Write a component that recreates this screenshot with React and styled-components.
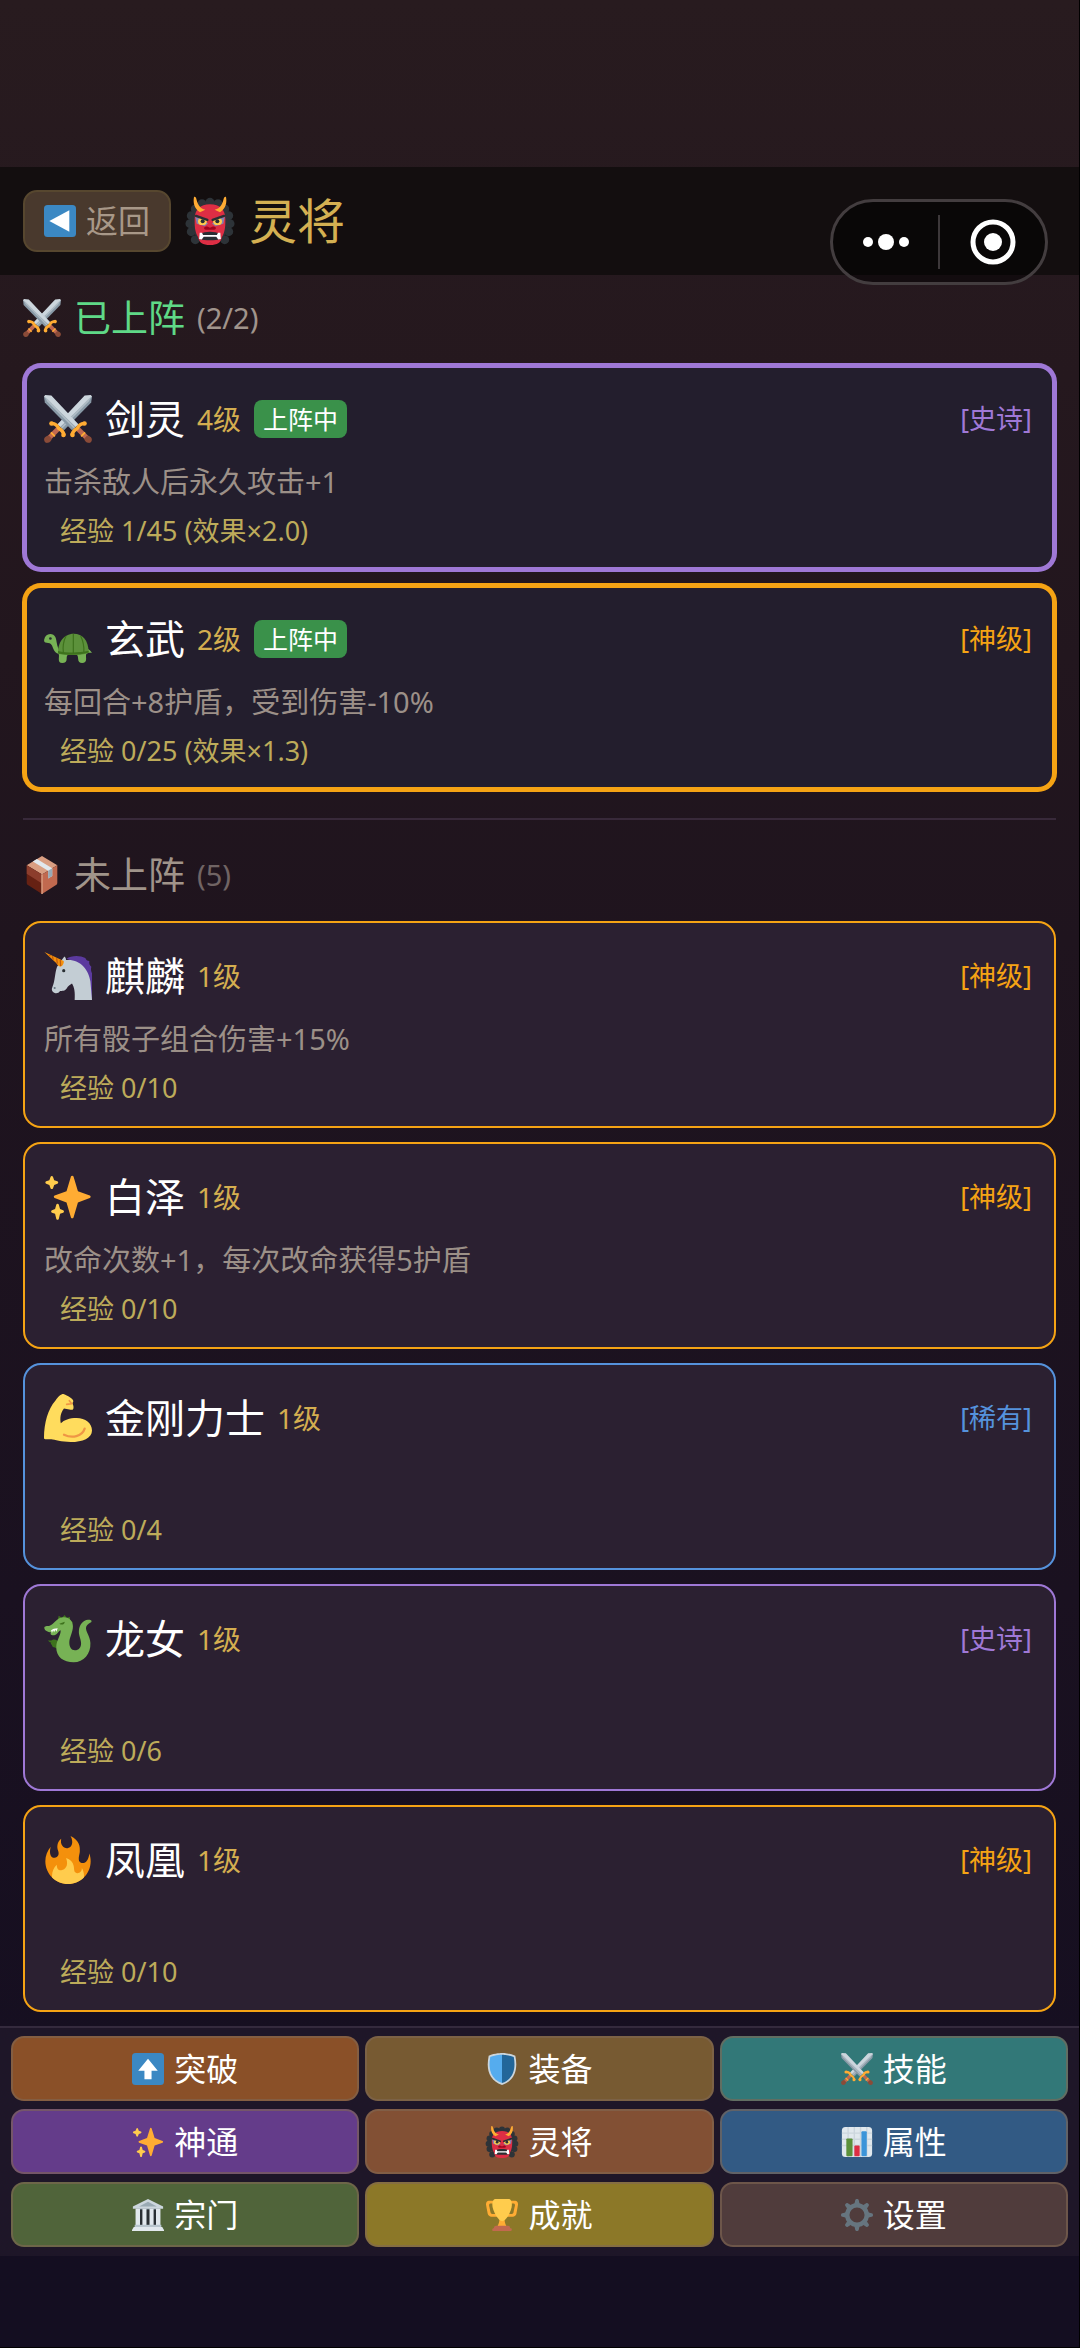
import React from 'react';
import styled, { createGlobalStyle } from 'styled-components';

const GlobalStyle = createGlobalStyle`
    * {
        box-sizing: border-box;
    }
    body {
        margin: 0;
        background: #140e21;
        font-family: 'Noto Sans', 'Noto Sans CJK SC', sans-serif;
    }
    button {
        font-family: inherit;
        cursor: pointer;
    }
`;

const rarities = {
    epic: { label: '[史诗]', color: '#9f78d6' },
    divine: { label: '[神级]', color: '#f5a314' },
    rare: { label: '[稀有]', color: '#5592dc' },
};

const Page = styled.div`
    min-height: 100vh;
    display: flex;
    flex-direction: column;
    padding-top: 167px;
    border-right: 1px solid #000;
    border-bottom: 1px solid #000;
    background: linear-gradient(#281b1f 0%, #25181e 16%, #1f141e 40%, #1a1120 68%, #140e21 96%);
`;

const Header = styled.header`
    display: flex;
    align-items: center;
    gap: 15px;
    height: 108px;
    padding: 0 23px;
    background: #130e0f;
`;

const BackButton = styled.button`
    display: flex;
    align-items: center;
    justify-content: center;
    gap: 10px;
    width: 148px;
    height: 62px;
    padding: 0;
    border: 2px solid #57472f;
    border-radius: 14px;
    background: #49392d;
    color: #a89888;
    font-size: 32px;
    line-height: 44px;
`;

const Title = styled.h1`
    display: flex;
    align-items: center;
    gap: 15px;
    margin: 0;
    color: #d4b052;
    font-size: 48px;
    line-height: 60px;
    font-weight: 400;
`;

const Capsule = styled.div`
    position: absolute;
    top: 199px;
    right: 32px;
    display: flex;
    align-items: center;
    width: 218px;
    height: 86px;
    border: 3px solid #433d3f;
    border-radius: 43px;
    background: rgba(0, 0, 0, 0.5);
`;

const CapsuleButton = styled.button`
    flex: 1;
    display: flex;
    align-items: center;
    justify-content: center;
    height: 54px;
    padding: 0;
    border: 0;
    background: none;

    & + & {
        border-left: 2px solid #3d383a;
    }
`;

const Main = styled.main`
    flex: 1;
    padding: 17px 23px 14px;
`;

const SectionTitle = styled.h2`
    display: flex;
    align-items: center;
    gap: 13px;
    margin: 0 0 20px;
    color: ${props => props.$color};
    font-size: 37px;
    line-height: 52px;
    font-weight: 400;
`;

const Count = styled.span`
    margin-left: -1px;
    color: ${props => props.$color};
    font-size: 29px;
`;

const Divider = styled.hr`
    height: 2px;
    margin: 27px 0 29px;
    border: 0;
    background: #38293a;
`;

const CardList = styled.div`
    display: flex;
    flex-direction: column;
    gap: ${props => props.$gap};
`;

const Card = styled.article`
    border: ${props => (props.$active ? '4px' : '2px')} solid ${props => props.$color};
    box-shadow: ${props => (props.$active ? `0 0 0 1px ${props.$color}` : 'none')};
    border-radius: 18px;
    padding: ${props => (props.$active ? '23px 20px 14px 17px' : '25px 22px 16px 19px')};
    background: ${props => (props.$active ? '#231e2d' : '#2b2031')};
`;

const CardHead = styled.div`
    display: flex;
    align-items: center;
    height: 56px;
    margin-bottom: 13px;
`;

const Name = styled.h3`
    margin: 0 12px 0 13px;
    color: #fff;
    font-size: 40px;
    line-height: 56px;
    font-weight: 400;
`;

const Level = styled.span`
    color: #d4ae50;
    font-size: 28px;
    line-height: 44px;
`;

const Badge = styled.span`
    margin-left: 13px;
    padding: 0 9px;
    border-radius: 8px;
    background: #3a914a;
    color: #fff;
    font-size: 25px;
    line-height: 38px;
`;

const Rarity = styled.span`
    margin-left: auto;
    color: ${props => props.$color};
    font-size: 27px;
    line-height: 44px;
`;

const Description = styled.p`
    min-height: 44px;
    margin: 0 0 5px;
    color: #9c9088;
    font-size: 29px;
    line-height: 44px;
`;

const Experience = styled.p`
    margin: 0;
    padding-left: 16px;
    color: #bdab5a;
    font-size: 27px;
    line-height: 44px;
`;

const BottomNav = styled.nav`
    display: grid;
    grid-template-columns: repeat(3, 1fr);
    gap: 8px 6px;
    margin-bottom: 91px;
    padding: 8px 11px 9px;
    border-top: 2px solid #342a3d;
    background: #1e1628;
`;

const NavButton = styled.button`
    display: flex;
    align-items: center;
    justify-content: center;
    gap: 10px;
    height: 65px;
    padding: 0;
    border: 2px solid rgba(128, 104, 84, 0.6);
    border-radius: 13px;
    background: ${props => props.$bg};
    color: #fff;
    font-size: 32px;
    line-height: 44px;
`;

const Svg = styled.svg`
    display: block;
    flex: none;
    width: ${props => props.$size}px;
    height: ${props => props.$size}px;
    overflow: visible;
`;

const Sword = () => (
    <>
        <path fill="#8899a6" d="M0 1.2L.6 5.6 21 26.5l4.6-4.3L5.3.9z" />
        <path fill="#ccd6dd" d="M0 1.2L23.8 24l2-2L5.5.4.9 0z" />
        <path fill="#aebbc4" d="M.5 1.2l2.8 2.4 20 20.6-1 1L2.4 4.8z" />
        <path stroke="#c1694f" strokeWidth="3.6" d="M25.5 25.5l6.5 6.6" />
        <path stroke="#ffac33" strokeWidth="2.6" strokeLinecap="round" d="M21 29.5c.6-2.2 2-3.4 4-4.6 1-2.2 2.6-3.4 5-3.6" fill="none" />
        <path stroke="#ffac33" strokeWidth="1.4" d="M30.8 28l-3 3" />
        <circle fill="#ffac33" cx="21.4" cy="30" r="1.7" />
        <circle fill="#ffac33" cx="30.4" cy="21.4" r="1.7" />
        <path fill="#8a4b38" d="M32.4 30.4c2 .2 3.7 1.6 3.5 3.3-.2 1.5-1.2 2.3-2.5 2.2-1.8 0-3-1.5-3.2-3.3z" />
    </>
);

const icons = {
    back: (
        <>
            <rect fill="#3b88c3" width="36" height="36" rx="4" />
            <path fill="#fff" d="M6 18l22.5-12v24z" />
        </>
    ),
    up: (
        <>
            <rect fill="#3b88c3" width="36" height="36" rx="4" />
            <path fill="#fff" d="M18 6.5L29 20h-7v9.5h-8V20H7z" />
        </>
    ),
    swords: (
        <>
            <g transform="translate(36 0) scale(-1 1)"><Sword /></g>
            <Sword />
        </>
    ),
    sparkles: (
        <>
            <path fill="#ffac33" d="M34.347 16.893l-8.899-3.294-3.323-10.891c-.128-.42-.517-.708-.956-.708-.439 0-.828.288-.956.708l-3.322 10.891-8.9 3.294c-.393.146-.653.519-.653.938 0 .418.26.793.653.938l8.895 3.293 3.324 11.223c.126.424.516.715.959.715.442 0 .833-.291.959-.716l3.324-11.223 8.896-3.293c.391-.144.652-.518.652-.937 0-.418-.261-.792-.653-.938z" />
            <path fill="#ffcc4d" d="M14.347 27.894l-2.314-.856-.9-3.3c-.118-.436-.513-.738-.964-.738-.451 0-.846.302-.965.737l-.9 3.3-2.313.856c-.393.146-.653.52-.653.938 0 .418.26.793.653.938l2.301.853.907 3.622c.112.444.511.756.97.756.459 0 .858-.312.97-.757l.907-3.622 2.301-.853c.393-.144.653-.519.653-.937 0-.418-.26-.793-.653-.937zM10.009 6.231l-2.364-.875-.876-2.365c-.145-.393-.519-.653-.938-.653-.418 0-.792.26-.938.653l-.875 2.365-2.365.875c-.393.146-.653.52-.653.938 0 .418.26.793.653.938l2.365.875.875 2.365c.146.393.52.653.938.653.418 0 .792-.26.938-.653l.875-2.365 2.365-.875c.393-.146.653-.52.653-.938 0-.418-.26-.792-.653-.938z" />
        </>
    ),
    fire: (
        <>
            <path fill="#f4900c" d="M35 19c0-2.062-.367-4.039-1.04-5.868-.46 5.389-3.333 8.157-6.335 6.868-2.812-1.208-.917-5.917-.777-8.164.236-3.809-.012-8.169-6.931-11.794 2.875 5.5.333 8.917-2.333 9.125-2.958.231-5.667-2.542-4.667-7.042-3.238 2.386-3.332 6.402-2.333 9 1.042 2.708-.042 4.958-2.583 5.208-2.84.28-4.418-3.041-2.963-8.333C2.52 10.965 1 14.805 1 19c0 9.389 7.611 17 17 17s17-7.611 17-17z" />
            <path fill="#ffcc4d" d="M28.394 23.999c.148 3.084-2.561 4.293-4.019 3.709-2.106-.843-1.541-2.291-2.083-5.291s-2.625-5.083-5.708-6c2.25 6.333-1.247 8.667-3.08 9.084-1.872.426-3.753-.001-3.968-4.007C7.352 23.668 6 26.676 6 30c0 .368.023.73.055 1.09C9.125 34.124 13.342 36 18 36s8.875-1.876 11.945-4.91c.032-.36.055-.722.055-1.09 0-2.187-.584-4.236-1.606-6.001z" />
        </>
    ),
    shield: (
        <>
            <path fill="#ccd6dd" d="M33 3c-7-3-15-3-15-3S10 0 3 3C0 18 3 31 18 36c15-5 18-18 15-33z" />
            <path fill="#55acee" d="M18 33.884C6.412 29.729 1.961 19.831 4.76 4.444 11.063 2.029 17.928 2 18 2z" />
            <path fill="#269" d="M31.24 4.444C24.983 2.037 18.13 2.001 18 2v31.884c11.588-4.155 16.039-14.053 13.24-29.44z" />
        </>
    ),
    trophy: (
        <>
            <path fill="#ffac33" d="M5.123 5h6C12.227 5 13 4.896 13 6V4c0-1.104-.773-2-1.877-2h-8c-2 0-3.583 2.125-3 5 0 0 1.791 9.375 1.917 9.958C2.373 18.5 4.164 20 6.081 20h6.958c1.105 0-.039-1.896-.039-3v-2c0 1.104-.773 2-1.877 2h-4c-1.104 0-1.833-1.042-2-2S3.539 7.667 3.539 7.667C3.206 5.75 4.018 5 5.123 5zm25.812 0h-6C23.831 5 22 4.896 22 6V4c0-1.104 1.831-2 2.935-2h8c2 0 3.584 2.125 3 5 0 0-1.633 9.419-1.771 10-.354 1.5-2.042 3-4 3h-7.146C21.914 20 22 18.104 22 17v-2c0 1.104 1.831 2 2.935 2h4c1.104 0 1.834-1.042 2-2s1.584-7.333 1.584-7.333C32.851 5.75 32.04 5 30.935 5zM20.832 22c0-6.958-2.709 0-2.709 0s-3-6.958-3 0-3.291 10-3.291 10h12.292s-3.292-3.042-3.292-10z" />
            <path fill="#ffcc4d" d="M29.123 6.577c0 6.775-6.77 18.423-11 18.423-4.231 0-11-11.649-11-18.423 0-5.775 2.75-6.577 3-6.577h16c.25 0 3 .802 3 6.577z" />
            <path fill="#c1694f" d="M11.2 30h13.9c1.1 0 1.9.9 1.9 2v1h.7c.8 0 1.3.6 1.3 1.4s.1 1.6-1.3 1.6H8.5C7.2 36 7 35.4 7 34.6c0-1 .7-1.6 1.5-1.6H9v-1c0-1.1 1.2-2 2.200-2z" />
        </>
    ),
    gear: (
        <>
            <g fill="#66757f">
                {[0, 45, 90, 135, 180, 225, 270, 315].map(angle => (
                    <path key={angle} transform={`rotate(${angle} 18 18)`} d="M15 6l1-4.500C16.200.4 17 0 18 0s1.800.4 2 1.500L21 6z" />
                ))}
            </g>
            <circle fill="none" stroke="#66757f" strokeWidth="5" cx="18" cy="18" r="11" />
        </>
    ),
    chart: (
        <>
            <rect fill="#e1e8ed" x="1" y="1" width="34" height="34" rx="4" />
            <path stroke="#ccd6dd" strokeWidth="1.6" d="M1 8h34M1 15h34M1 22h34M8 1v34M15 1v34M22 1v34M29 1v34" />
            <rect fill="#5c913b" x="6" y="14" width="7" height="20" rx="1" />
            <rect fill="#dd2e44" x="15" y="22" width="6" height="12" rx="1" />
            <rect fill="#3b94d9" x="23" y="6" width="6" height="28" rx="1" />
        </>
    ),
    temple: (
        <>
            <path fill="#66757f" d="M5 10h26v20H5z" />
            <path fill="#292f33" d="M8 12h20v18H8z" />
            <path fill="#ccd6dd" d="M18 0L1 8.500V11h34V8.500z" />
            <path fill="#9aaab4" d="M18 3L8 8.500h20z" />
            <path fill="#e1e8ed" d="M4 11h5v19H4zm7.700 0h4.600v19h-4.600zm8 0h4.600v19h-4.600zM27 11h5v19h-5z" />
            <path fill="#b8c5cd" d="M3 29h30v3H3z" />
            <path fill="#e1e8ed" d="M2 31.500h32l2 3.500v1H0v-1z" />
        </>
    ),
    box: (
        <>
            <path fill="#d99e82" d="M18 0l14.500 8.800L18 17.500 3.500 8.800z" />
            <path fill="#c1694f" d="M32.500 8.800v16.500c0 1-.4 1.700-1.200 2.200L18 36V17.500z" />
            <path fill="#662113" d="M3.500 8.800v16.500c0 1 .4 1.700 1.200 2.200L18 36V17.500z" />
            <path fill="#9c4a38" d="M3.500 8.800v8L18 26v-8.500z" opacity=".7" />
            <path fill="#d99e82" d="M17.300 17.200h1.400V36h-1.400z" />
            <path fill="#e1e8ed" d="M9.300 5.200l3.900-2.300 14.500 8.800V19l-3.900 2.300V14z" />
            <path fill="#99aab5" d="M23.800 14l3.900-2.300V19l-3.900 2.300z" />
        </>
    ),
    bicep: (
        <>
            <path fill="#ffdc5d" d="M14.500 0c1 0 6.500 3 7.300 4.600.5 1-.2 1.800-.6 2.400.8 1 1.200 3 .8 4-.5 1.300-2 .8-3 .6L15 10.800C12.500 14 11.800 17.500 12.600 22 15 19.500 19 18 24.500 18 31 18 36 22 36 27.300 36 33 29 36 20 36c-7 0-12-1.700-14.500-2H1c-1 0-1-.5-1-1.500C0 22 3 11 8.500 5c2-3 4.300-5 6-5z" />
            <path fill="none" stroke="#ef9645" strokeWidth="1.700" strokeLinecap="round" d="M15 30.500c6 3 13.500 1.500 15.500-4.500" />
            <path fill="none" stroke="#ef9645" strokeWidth="1.200" strokeLinecap="round" d="M21 7.200l-4 .6M19 5l1.500 2" />
        </>
    ),
    turtle: (
        <>
            <path fill="#77b255" d="M4.700 14.300c-2.500 0-4 1.700-4.600 4.200-.2 1.500.4 2.300 1.900 2.300 1.500.1 3 .3 4 2 1 2.500 1.800 5.200 4.700 6.200.8.400.5 2 .4 4 0 1.800.5 3 2.600 3 2.200 0 3.300-1 3.300-3 0-1.600.2-3 1-3h6.500c.8 0 1 1.500 1.100 3 .1 2 1 3 3 3s3-1 3-3c0-1.700-.4-3 .3-4.200C33.500 28 35 28.500 36 28.300c-1-1.300-2-2.300-4-3.300L12 27C9.500 24.500 9.600 18.500 8.500 16.500c-.8-1.500-2-2.200-3.800-2.200z" />
            <path fill="#5c913b" d="M10.700 29c-.8-8 4-15 11.600-15 6.700 0 11 5 11.200 13.500 0 .8-.3 1-1 1.300-6.500 1.500-14.500 1.800-21.800.2z" />
            <path fill="#3e721d" d="M10.500 27c7.500 1.600 15.500 1.500 23-.1v1.300c-6.800 2-15.500 2.200-22.900.6z" />
            <path fill="none" stroke="#3e721d" strokeWidth=".9" d="M16.500 15.800c-2 4-2.500 7.500-2 12M22 14v14.500M27.500 15.800c2 4 2.600 7.500 2.400 12" />
            <circle fill="#292f33" cx="4.800" cy="17.600" r="1" />
        </>
    ),
    unicorn: (
        <>
            <path fill="#5b3a9e" d="M17 5c3-2.500 10-2.800 14-.5.5 1.500 1.500 2 3 2.300-.3 2 0 3 1.500 4.200-.5 1.800-.2 3.500.5 5V36h-3C33 20 27 8 17 5z" />
            <path fill="#c3cdd4" d="M15.300 3.400c1 .7 1.200 1.800 1.200 2.600C27 5 33.500 13 34.800 22L36 36H23c.4-6-.3-9.500-2-12.300-1.500 1-3 2-4 3.600-1.300 2-3.500 1.700-5 2-.8 1.500-2.500 2-4 1.500-2-.8-2.700-2.500-1.700-4.500C8.500 21 8 16 9.800 11L14 5z" />
            <path fill="#f4900c" d="M.3 0L14.800 6.800c.4 1.300-.8 4-2.300 4.200C11 11 10 9.800 9.300 8.500z" />
            <path fill="none" stroke="#be5a0c" strokeWidth=".9" d="M3.600 2l1.300 1M6.200 3.200L7 5.800M9.500 4.700l.5 4M12.200 6l.3 4.500" />
            <circle fill="#292f33" cx="14.800" cy="14" r="1.200" />
            <circle fill="#66757f" cx="8" cy="27" r=".8" />
        </>
    ),
    dragon: (
        <>
            <path fill="#3e721d" d="M10.500 3l.5-2.500 2.500 1.500 2-2 1.500 2 2.500-.5v2.500l2 1.500-2 5zM3 19c1.500.5 2.500 0 3.500-.5 2-.5 4 .5 5 2.500l1 4c-2.500 1-4-.5-4-.5s-2.500 0-2.500-2c-1.200-.5-1-1.500-.5-2C4.500 20.800 3.500 20 3 19z" />
            <path fill="#77b255" d="M.2 9.300c.8-1.500 2.800-.8 4-1.300C7.500 7 9 2.500 13.500 1.800c5-.8 8.200 2.500 8.200 6.700 0 4.500-2.500 8-2.700 12-.1 3.500 1.500 6 4.200 6 2.800 0 4.800-2.300 4.600-5.500-.2-3.500-2-5.500-1.600-9.500.4-4.500 3.300-7.700 6.800-8 2 0 3 .4 2.600 1.500-.3.900-3.300 1.400-4 4-.8 3 2.900 6.500 3.200 12 .4 8-5 14.500-12.600 14.500-7.500 0-13.200-4-13-11.500.2-5.500 3.400-8.300 3.300-12.500-1 .3-1.700 1.500-3 2.800-1 .9-2.600 1.200-3.800.7-1-.3-.9-1.300-.4-2C3 12.500.3 12 .2 9.300z" />
            <path fill="#fff" d="M5.300 11.500l.7 2 .8-2 .8 1.500.9-2 .8 1.500 1-2.500-3 .3z" />
            <path fill="#3e721d" d="M11.500 6.500l4-1.500c.3 1.700-2 3-4 1.500z" />
        </>
    ),
    ogre: (
        <>
            <g fill="#2d3338">
                {[[12, 5], [18, 4], [24, 5], [7, 9], [29, 9], [4, 14], [32, 14], [3, 20], [33, 20], [4, 26], [32, 26], [7, 32], [29, 32]].map(([x, y]) => (
                    <circle key={`${x}-${y}`} cx={x} cy={y} r="3.400" />
                ))}
                <ellipse cx="18" cy="19" rx="14" ry="15.500" />
            </g>
            <path fill="#dd2e44" d="M18 5.500c-7.500 0-11.500 4-11.500 11 0 4-.2 9 2.500 13.500C10 34.500 12.500 36 18 36s8-1.500 9-6c2.700-4.500 2.500-9.500 2.500-13.500 0-7-4-11-11.500-11z" />
            <path fill="#ffac33" d="M6 0c-.8 4 0 8.500 4.500 11.500l4-2C9.500 8.500 8.500 4 7.500.5 7 0 6.500-.3 6 0zM30 0c.8 4 0 8.500-4.500 11.500l-4-2c5-1 6-5.500 7-9C29 0 29.500-.3 30 0z" />
            <path fill="#55acee" d="M7 15l5 .8 4.500 4L14 22l-6-2zM29 15l-5 .8-4.500 4L22 22l6-2z" opacity=".65" />
            <ellipse fill="#ffcc4d" cx="12.300" cy="18.300" rx="3.300" ry="2.700" />
            <ellipse fill="#ffcc4d" cx="23.700" cy="18.300" rx="3.300" ry="2.700" />
            <circle fill="#292f33" cx="12.500" cy="18.200" r="1.500" />
            <circle fill="#292f33" cx="23.500" cy="18.200" r="1.500" />
            <path fill="none" stroke="#292f33" strokeWidth="1.800" strokeLinecap="round" d="M7.500 14.200l8.500 3M28.500 14.200l-8.500 3" />
            <path fill="#a0041e" d="M14 22.500c1-.8 2-.5 4 .5 2-1 3-1.300 4-.5 1 1 .2 2-1 2h-6c-1.200 0-2-1-1-2z" />
            <path fill="#292f33" d="M10.500 27.500c4-2 11-2 15 0l.5 4c-4 1.300-12 1.300-16 0z" />
            <path fill="#fff" d="M10.300 26.800H12l.8 1.700h10.400l.8-1.700h1.700l.5 4.700-2 .3-1.500-2H13.300l-1.500 2-2-.3z" />
        </>
    ),
};

const Icon = ({ name, size }) => (
    <Svg $size={size} viewBox="0 0 36 36" aria-hidden="true">{icons[name]}</Svg>
);

const deployed = [
    { icon: 'swords', name: '剑灵', level: 4, rarity: 'epic', desc: '击杀敌人后永久攻击+1', exp: '1/45 (效果×2.0)' },
    { icon: 'turtle', name: '玄武', level: 2, rarity: 'divine', desc: '每回合+8护盾，受到伤害-10%', exp: '0/25 (效果×1.3)' },
];

const reserve = [
    { icon: 'unicorn', name: '麒麟', level: 1, rarity: 'divine', desc: '所有骰子组合伤害+15%', exp: '0/10' },
    { icon: 'sparkles', name: '白泽', level: 1, rarity: 'divine', desc: '改命次数+1，每次改命获得5护盾', exp: '0/10' },
    { icon: 'bicep', name: '金刚力士', level: 1, rarity: 'rare', desc: '', exp: '0/4' },
    { icon: 'dragon', name: '龙女', level: 1, rarity: 'epic', desc: '', exp: '0/6' },
    { icon: 'fire', name: '凤凰', level: 1, rarity: 'divine', desc: '', exp: '0/10' },
];

const navItems = [
    { icon: 'up', label: '突破', bg: '#8a5028' },
    { icon: 'shield', label: '装备', bg: '#775a32' },
    { icon: 'swords', label: '技能', bg: '#327878' },
    { icon: 'sparkles', label: '神通', bg: '#643c8a' },
    { icon: 'ogre', label: '灵将', bg: '#825034' },
    { icon: 'chart', label: '属性', bg: '#325a84' },
    { icon: 'temple', label: '宗门', bg: '#50643a' },
    { icon: 'trophy', label: '成就', bg: '#8c7828' },
    { icon: 'gear', label: '设置', bg: '#503c3c' },
];

const SpiritCard = ({ spirit, active }) => {
    const rarity = rarities[spirit.rarity];
    return (
        <Card $active={active} $color={rarity.color}>
            <CardHead>
                <Icon name={spirit.icon} size={48} />
                <Name>{spirit.name}</Name>
                <Level>{spirit.level}级</Level>
                {active && <Badge>上阵中</Badge>}
                <Rarity $color={rarity.color}>{rarity.label}</Rarity>
            </CardHead>
            <Description>{spirit.desc}</Description>
            <Experience>经验 {spirit.exp}</Experience>
        </Card>
    );
};

const App = () => (
    <Page>
        <GlobalStyle />
        <Header>
            <BackButton type="button">
                <Icon name="back" size={32} />
                返回
            </BackButton>
            <Title>
                <Icon name="ogre" size={48} />
                灵将
            </Title>
        </Header>
        <Capsule>
            <CapsuleButton type="button" aria-label="更多">
                <svg width="48" height="18" viewBox="0 0 48 18" fill="#fff">
                    <circle cx="6" cy="9" r="5" />
                    <circle cx="24" cy="9" r="8" />
                    <circle cx="42" cy="9" r="5" />
                </svg>
            </CapsuleButton>
            <CapsuleButton type="button" aria-label="关闭">
                <svg width="46" height="46" viewBox="0 0 46 46">
                    <circle cx="23" cy="23" r="20" fill="none" stroke="#fff" strokeWidth="5" />
                    <circle cx="23" cy="23" r="9" fill="#fff" />
                </svg>
            </CapsuleButton>
        </Capsule>

        <Main>
            <SectionTitle $color="#5fd987">
                <Icon name="swords" size={38} />
                已上阵
                <Count $color="#a0948c">(2/2)</Count>
            </SectionTitle>
            <CardList $gap="13px">
                {deployed.map(spirit => (
                    <SpiritCard key={spirit.name} spirit={spirit} active />
                ))}
            </CardList>
            <Divider />
            <SectionTitle $color="#a0948a">
                <Icon name="box" size={38} />
                未上阵
                <Count $color="#706464">(5)</Count>
            </SectionTitle>
            <CardList $gap="14px">
                {reserve.map(spirit => (
                    <SpiritCard key={spirit.name} spirit={spirit} />
                ))}
            </CardList>
        </Main>

        <BottomNav>
            {navItems.map(item => (
                <NavButton key={item.label} type="button" $bg={item.bg}>
                    <Icon name={item.icon} size={32} />
                    {item.label}
                </NavButton>
            ))}
        </BottomNav>
    </Page>
);

export default App;
